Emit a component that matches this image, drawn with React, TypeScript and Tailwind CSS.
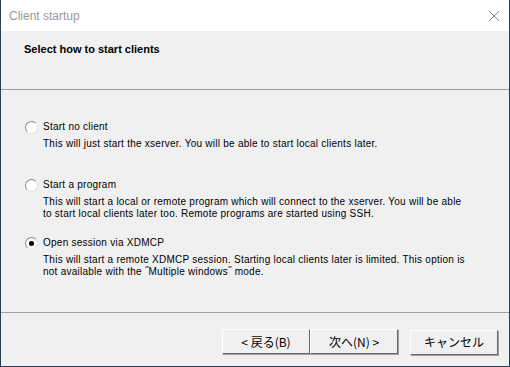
import React from "react";

type Option = {
  label: string;
  desc: string[];
  checked: boolean;
};

const options: Option[] = [
  {
    label: "Start no client",
    desc: ["This will just start the xserver. You will be able to start local clients later."],
    checked: false
  },
  {
    label: "Start a program",
    desc: [
      "This will start a local or remote program which will connect to the xserver. You will be able",
      "to start local clients later too. Remote programs are started using SSH."
    ],
    checked: false
  },
  {
    label: "Open session via XDMCP",
    desc: [
      "This will start a remote XDMCP session. Starting local clients later is limited. This option is",
      "not available with the \u02ddMultiple windows\u02dd mode."
    ],
    checked: true
  }
];

const buttons = ["< 戻る(B)", "次へ(N) >"];

function Radio({ checked }: { checked: boolean }) {
  return (
    <div className="w-[13px] h-[13px] rounded-full border border-[#8a8a8a] border-b-[#e0e0e0] border-r-[#e0e0e0] bg-white flex items-center justify-center shrink-0">
      {checked && <div className="w-[5px] h-[5px] rounded-full bg-black" />}
    </div>
  );
}

function Button({ label }: { label: string }) {
  return (
    <button className="w-[88px] h-[25px] bg-[#f0f0f0] border border-white border-r-[#696969] border-b-[#696969] shadow-[1px_1px_0_#a0a0a0] text-[12px] text-black font-['Noto_Sans_CJK_JP',sans-serif] leading-none">
      {label}
    </button>
  );
}

export default function App() {
  return (
    <div className="w-[510px] h-[367px] flex flex-col bg-[#f0f0f0] border-x border-b border-[#2c3e50] overflow-hidden">
      <div className="h-[31px] bg-white flex items-center justify-between pl-[8px] pr-[9px] shrink-0">
        <span className="text-[12px] text-[#999999] font-['Liberation_Sans',sans-serif]">
          Client startup
        </span>
        <svg width="12" height="12" viewBox="0 0 12 12">
          <path d="M1 1L11 11M11 1L1 11" stroke="#8a8a8a" strokeWidth="1" />
        </svg>
      </div>
      <div className="h-[58px] pt-[10px] pl-[23px] shrink-0">
        <h1 className="text-[11px] font-bold leading-[16px] text-black font-['Liberation_Sans',sans-serif]">
          Select how to start clients
        </h1>
      </div>
      <div className="h-px bg-[#a0a0a0] shrink-0" />
      <div className="h-[222px] pt-[29px] pl-[24px] shrink-0 font-['Liberation_Sans',sans-serif] text-[10px] tracking-[0.25px] text-black">
        {options.map(option => (
          <div className="h-[58px] flex flex-col" key={option.label}>
            <div className="flex items-center gap-[5px] h-[16px]">
              <Radio checked={option.checked} />
              <span className="leading-[16px]">{option.label}</span>
            </div>
            <div className="pl-[18px] mt-[3px]">
              {option.desc.map(line => (
                <p className="leading-[11.5px]" key={line}>
                  {line}
                </p>
              ))}
            </div>
          </div>
        ))}
      </div>
      <div className="h-px bg-[#a0a0a0] shrink-0" />
      <div className="flex-1 flex items-start pt-[16px] pl-[221px]">
        {buttons.map(label => (
          <Button label={label} key={label} />
        ))}
        <div className="ml-[12px]">
          <Button label="キャンセル" />
        </div>
      </div>
    </div>
  );
}
